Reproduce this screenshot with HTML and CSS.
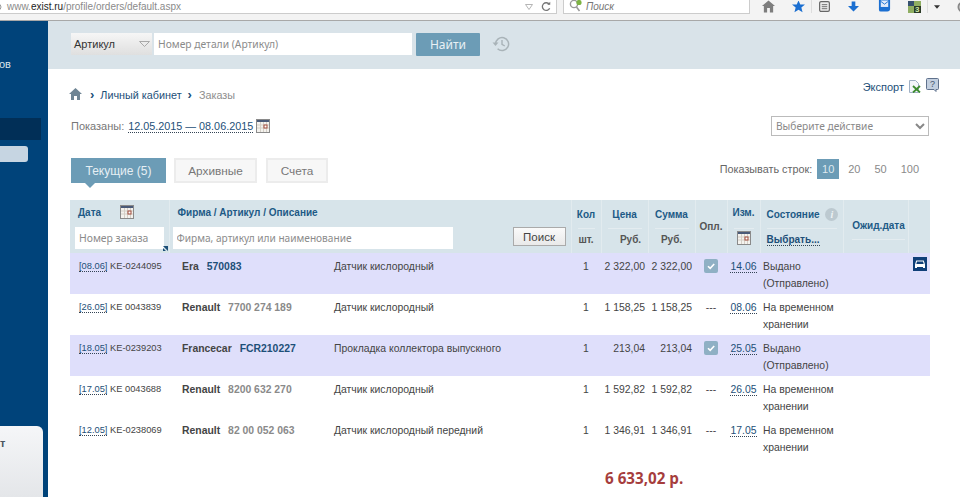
FILE: index.html
```html
<!DOCTYPE html>
<html lang="ru">

<head>
    <meta charset="UTF-8">
    <title>Заказы</title>
    <link rel="stylesheet" href="styles.css">
</head>

<body>
    <svg class="sprite">
        <symbol id="cal" viewBox="0 0 14 14">
            <rect x="0.5" y="0.5" width="13" height="13" fill="#f4f2ee" stroke="#8a8a8a" />
            <rect x="1" y="1" width="12" height="2" fill="#4a5a78" />
            <path d="M1 6h12M1 9h12M4.5 3v10M7.5 3v10M10.5 3v10" stroke="#d4cfc6" fill="none" />
            <rect x="8" y="6" width="3" height="3" fill="#fff" stroke="#a04a3a" />
        </symbol>
        <symbol id="check" viewBox="0 0 14 14">
            <rect width="14" height="14" rx="2" fill="#8fb0c4" />
            <path d="M4 7.2l2.2 2.2L10.2 5" stroke="#fff" stroke-width="1.6" fill="none" />
        </symbol>
    </svg>

    <div class="browser">
        <div class="urlbar">
            <svg class="url-globe" width="7" height="8" viewBox="0 0 7 8"><circle cx="2" cy="4" r="3" fill="none" stroke="#999" /></svg>
            <span class="url">www.<b>exist.ru</b>/profile/orders/default.aspx</span>
            <svg class="url-arrow" width="8" height="6" viewBox="0 0 8 6"><path d="M0.5 0.5h7L4 5.5z" fill="none" stroke="#b5b5b5" /></svg>
            <svg class="url-reload" width="10" height="11" viewBox="0 0 12 12"><path d="M10 3.5A4.6 4.6 0 1 0 10.4 8" fill="none" stroke="#777" stroke-width="1.6" /><path d="M7.5 3.8h3.6V0.4z" fill="#777" /></svg>
        </div>
        <div class="websearch">
            <svg width="16" height="13" viewBox="0 0 16 13"><circle cx="5" cy="4" r="3.6" fill="none" stroke="#999" stroke-width="1.4" /><path d="M7.5 7l3 4" stroke="#999" stroke-width="1.6" /><circle cx="10" cy="2.5" r="2.6" fill="#7cb342" /></svg>
            <i>Поиск</i>
        </div>
        <div class="tools">
            <svg class="t-home" width="13" height="13" viewBox="0 0 14 13"><path d="M7 0L0 6h2v7h3.500V8h3v5H12V6h2z" fill="#7d7d7d" /></svg>
            <svg class="t-star" width="13" height="12" viewBox="0 0 16 13"><path d="M8 -1.500l2.200 5H16l-4.500 3.700L13 13 8 9.800 3 13l1.500-5.800L0 3.500h5.800z" fill="#1b6fd1" /></svg>
            <span class="t-sep"></span>
            <svg class="t-read" width="11" height="11" viewBox="0 0 12 12"><rect x="0.700" y="0.700" width="10.600" height="10.600" rx="1.500" fill="#eee" stroke="#666" stroke-width="1.300" /><path d="M3 4h6M3 6.200h6M3 8.400h6" stroke="#666" /></svg>
            <svg class="t-load" width="11" height="11" viewBox="0 0 12 11"><path d="M4 0h4v5h4l-6 6-6-6h4z" fill="#1b6fd1" /></svg>
            <svg class="t-mail" width="13" height="13" viewBox="0 0 14 13"><path d="M1 -1h12v10a3 3 0 0 1-3 3H3a2 2 0 0 1-2-2z" fill="#1b6fd1" /><path d="M3 0h8v7H3z" fill="#dfeafa" /><path d="M3 1l4 3 4-3" stroke="#1b6fd1" fill="none" /></svg>
            <svg class="t-ext" width="13" height="12" viewBox="0 0 13 12"><rect width="13" height="12" fill="#8fae62" /><rect x="0" y="0" width="6" height="5" fill="#35506e" /><rect x="6" y="5" width="7" height="7" fill="#2a3a26" /><text x="7" y="11" class="tool-text">3</text></svg>
            <span class="t-sep t-sep2"></span>
            <svg class="t-down" width="6" height="4" viewBox="0 0 7 4"><path d="M0 0h7L3.500 4z" fill="#333" /></svg>
            <svg class="t-last" width="12" height="12" viewBox="0 0 12 12"><circle cx="6" cy="6" r="4.500" fill="none" stroke="#888" stroke-width="2" /></svg>
        </div>
    </div>

    <div class="page">
        <div class="sidebar">
            <div class="side-text">ов</div>
            <div class="side-active"></div>
            <div class="side-sub"></div>
            <div class="side-card">т</div>
        </div>

        <div class="main">
            <div class="searchbar">
                <div class="kind">Артикул<svg width="11" height="6" viewBox="0 0 11 6"><path d="M0.500 0.500h10L5.500 5.500z" fill="none" stroke="#a9a9a9" /></svg></div>
                <input class="part" type="text" placeholder="Номер детали (Артикул)">
                <button class="find">Найти</button>
                <svg class="history" width="18" height="16" viewBox="0 0 18 16"><path d="M3.600 8a6.500 6.500 0 1 1 2 4.700" fill="none" stroke="#a9b3b8" stroke-width="1.500" /><path d="M0.500 6.500h6l-3 3.500z" fill="#a9b3b8" /><path d="M10 4v4.300l2.800 1.700" fill="none" stroke="#a9b3b8" stroke-width="1.400" /></svg>
            </div>

            <div class="content">
                <div class="crumbs-row">
                    <div class="crumbs">
                        <svg width="13" height="12" viewBox="0 0 13 12"><path d="M6.500 0L0 6h2v6h3V8h3v4h3V6h2z" fill="#6f8594" /></svg>
                        <span class="sep">›</span>
                        <a>Личный кабинет</a>
                        <span class="sep">›</span>
                        <span class="cur">Заказы</span>
                    </div>
                    <div class="export">
                        <a>Экспорт</a>
                        <svg width="13" height="13" viewBox="0 0 13 13"><path d="M1.500 0.500h6l3 3v9h-9z" fill="#f3f6fa" stroke="#9fb0c4" /><path d="M5 6l7 6.500M12 6l-7 6.500" stroke="#3d8b2f" stroke-width="1.800" /></svg>
                        <svg class="help" width="13" height="14" viewBox="0 0 13 14"><path d="M1.500 0.500h10a1 1 0 0 1 1 1v9a1 1 0 0 1-1 1h-1.500v2l-2-2h-6.500a1 1 0 0 1-1-1v-9a1 1 0 0 1 1-1z" fill="#c3cfdf" stroke="#5f718c" /><text x="6.500" y="9" class="help-text">?</text></svg>
                    </div>
                </div>

                <div class="dates-row">
                    <div class="dates">
                        Показаны:
                        <a class="dotted">12.05.2015 — 08.06.2015</a>
                        <svg class="cal" width="14" height="14"><use href="#cal" /></svg>
                    </div>
                    <select class="action">
                        <option>Выберите действие</option>
                    </select>
                </div>

                <div class="tabs-row">
                    <div class="tabs">
                        <div class="tab tab-on">Текущие (5)</div>
                        <div class="tab tab-arch">Архивные</div>
                        <div class="tab tab-bills">Счета</div>
                    </div>
                    <div class="pager">
                        <span>Показывать строк:</span>
                        <span class="page-on">10</span>
                        <span class="page-n">20</span>
                        <span class="page-n">50</span>
                        <span class="page-n">100</span>
                    </div>
                </div>

                <table class="orders">
                    <colgroup>
                        <col class="c-date">
                        <col class="c-firm">
                        <col class="c-desc">
                        <col class="c-qty">
                        <col class="c-price">
                        <col class="c-sum">
                        <col class="c-paid">
                        <col class="c-chg">
                        <col class="c-state">
                        <col class="c-wait">
                        <col class="c-icon">
                    </colgroup>
                    <thead>
                        <tr class="h1">
                            <th rowspan="2" class="th-date">
                                <div class="date-title">Дата <svg width="14" height="14"><use href="#cal" /></svg></div>
                                <div class="order-filter">
                                    <input type="text" placeholder="Номер заказа">
                                    <svg width="5" height="5" viewBox="0 0 5 5"><path d="M0 0l5 5V0zM0 2l3 3H0z" fill="#1d4f78" /></svg>
                                </div>
                            </th>
                            <th rowspan="2" colspan="2" class="th-firm">
                                <div class="firm-title">Фирма / Артикул / Описание</div>
                                <div class="firm-filter">
                                    <input type="text" placeholder="Фирма, артикул или наименование">
                                    <button>Поиск</button>
                                </div>
                            </th>
                            <th>Кол</th>
                            <th>Цена</th>
                            <th>Сумма</th>
                            <th rowspan="2" class="plain">Опл.</th>
                            <th class="th-chg">Изм.</th>
                            <th class="th-state">Состояние <span class="info">i</span></th>
                            <th rowspan="2" class="th-wait"><span>Ожид.дата</span></th>
                            <th rowspan="2"></th>
                        </tr>
                        <tr class="h2">
                            <th class="plain">шт.</th>
                            <th class="plain th-rub">Руб.</th>
                            <th class="plain">Руб.</th>
                            <th><svg width="14" height="14"><use href="#cal" /></svg></th>
                            <th class="th-state"><a class="dotted">Выбрать...</a></th>
                        </tr>
                    </thead>
                    <tbody>
                        <tr class="mark">
                            <td class="date"><a class="dotted">[08.06]</a> KE-0244095</td>
                            <td class="firm"><b>Era</b><a class="art art-link">570083</a></td>
                            <td>Датчик кислородный</td>
                            <td class="qty">1</td>
                            <td class="num">2 322,00</td>
                            <td class="num">2 322,00</td>
                            <td class="paid"><svg width="14" height="14"><use href="#check" /></svg></td>
                            <td class="chg"><a class="dotted">14.06</a></td>
                            <td class="state">Выдано (Отправлено)</td>
                            <td></td>
                            <td class="car">
                                <svg width="14" height="14" viewBox="0 0 14 14"><rect width="14" height="14" fill="#0f3f78" /><path d="M2 7.500l1.200-4h7.600l1.200 4v3.500h-2V10H4v1H2z" fill="#fff" /><path d="M4 4.500h6l0.700 2.500H3.300z" fill="#0f3f78" /></svg>
                            </td>
                        </tr>
                        <tr>
                            <td class="date"><a class="dotted">[26.05]</a> KE 0043839</td>
                            <td class="firm"><b>Renault</b><a class="art">7700 274 189</a></td>
                            <td>Датчик кислородный</td>
                            <td class="qty">1</td>
                            <td class="num">1 158,25</td>
                            <td class="num">1 158,25</td>
                            <td class="paid">---</td>
                            <td class="chg"><a class="dotted">08.06</a></td>
                            <td class="state">На временном хранении</td>
                            <td></td>
                            <td></td>
                        </tr>
                        <tr class="mark">
                            <td class="date"><a class="dotted">[18.05]</a> KE-0239203</td>
                            <td class="firm"><b>Francecar</b><a class="art art-link">FCR210227</a></td>
                            <td>Прокладка коллектора выпускного</td>
                            <td class="qty">1</td>
                            <td class="num">213,04</td>
                            <td class="num">213,04</td>
                            <td class="paid"><svg width="14" height="14"><use href="#check" /></svg></td>
                            <td class="chg"><a class="dotted">25.05</a></td>
                            <td class="state">Выдано (Отправлено)</td>
                            <td></td>
                            <td></td>
                        </tr>
                        <tr>
                            <td class="date"><a class="dotted">[17.05]</a> KE 0043688</td>
                            <td class="firm"><b>Renault</b><a class="art">8200 632 270</a></td>
                            <td>Датчик кислородный</td>
                            <td class="qty">1</td>
                            <td class="num">1 592,82</td>
                            <td class="num">1 592,82</td>
                            <td class="paid">---</td>
                            <td class="chg"><a class="dotted">26.05</a></td>
                            <td class="state">На временном хранении</td>
                            <td></td>
                            <td></td>
                        </tr>
                        <tr>
                            <td class="date"><a class="dotted">[12.05]</a> KE-0238069</td>
                            <td class="firm"><b>Renault</b><a class="art">82 00 052 063</a></td>
                            <td>Датчик кислородный передний</td>
                            <td class="qty">1</td>
                            <td class="num">1 346,91</td>
                            <td class="num">1 346,91</td>
                            <td class="paid">---</td>
                            <td class="chg"><a class="dotted">17.05</a></td>
                            <td class="state">На временном хранении</td>
                            <td></td>
                            <td></td>
                        </tr>
                    </tbody>
                </table>

                <div class="total">6 633,02 р.</div>
            </div>
        </div>
    </div>
</body>

</html>
```

FILE: styles.css
```css
html,
body {
    margin: 0;
    height: 497px;
    overflow: hidden;
    background: #fff;
}

body {
    font-family: "Liberation Sans", Arial, sans-serif;
    font-size: 11px;
    color: #444;
}

.sprite {
    display: none;
}

a {
    color: #1d4f78;
}

.dotted {
    border-bottom: 1px dotted #345;
}

/* browser chrome */
.browser {
    display: flex;
    align-items: flex-start;
    height: 20px;
    background: #f3f3f3;
    border-bottom: 1px solid #a8a8a8;
    overflow: hidden;
}

.urlbar {
    display: flex;
    flex: none;
    align-items: center;
    width: 556px;
    height: 13px;
    background: #fff;
    border-right: 1px solid #ccc;
    border-bottom: 1px solid #ccc;
}

.url-globe {
    margin-left: -4px;
}

.url {
    flex: 1;
    padding-left: 4px;
    font-size: 10px;
    color: #8a8a8a;
}

.url b {
    font-weight: normal;
    color: #222;
}

.url-arrow {
    margin-right: 8px;
}

.url-reload {
    margin-right: 5px;
}

.websearch {
    display: flex;
    flex: none;
    align-items: center;
    gap: 1px;
    width: 180px;
    height: 13px;
    margin-left: 6px;
    padding-left: 5px;
    background: #fff;
    border: 1px solid #ccc;
    border-top: 0;
    color: #777;
    font-size: 10px;
}

.tools {
    display: flex;
    flex: none;
    align-items: center;
    height: 13px;
    margin-left: 12px;
}

.t-star { margin-left: 17px; }
.t-read { margin-left: 7px; }
.t-load { margin-left: 18px; }
.t-mail { margin-left: 19px; }
.t-ext { margin-left: 17px; }
.t-down { margin-left: 6px; }
.t-last { margin-left: 17px; }

.t-sep {
    width: 1px;
    height: 13px;
    margin-left: 6px;
    background: #ddd;
}

.t-sep2 {
    margin-left: 6px;
}

.tool-text {
    font-size: 8px;
    font-weight: bold;
    fill: #cfe8a8;
}

/* page */
.page {
    display: flex;
    height: 476px;
}

.sidebar {
    display: flex;
    flex-direction: column;
    width: 48px;
    background: #00437a;
}

.side-text {
    margin: 37px 0 0 -1px;
    height: 13px;
    line-height: 13px;
    color: #d7e2ea;
    font-size: 11px;
}

.side-active {
    width: 41px;
    height: 22px;
    margin-top: 47px;
    background: #012f57;
}

.side-sub {
    width: 28px;
    height: 16px;
    margin-top: 6px;
    background: #c6d5e2;
    border-radius: 0 3px 3px 0;
}

.side-card {
    width: 43px;
    margin-top: auto;
    height: 71px;
    padding-top: 11px;
    box-sizing: border-box;
    background: linear-gradient(#f5f6f8, #e4e6e9);
    border-radius: 0 6px 0 0;
    color: #4a5560;
    font-weight: bold;
    font-size: 11px;
}

.main {
    flex: 1;
    min-width: 0;
}

.searchbar {
    display: flex;
    align-items: center;
    height: 48px;
    padding: 0 0 2px 23px;
    box-sizing: border-box;
    background: #d9e3e9;
}

.kind {
    display: flex;
    align-items: center;
    justify-content: space-between;
    width: 81px;
    height: 22px;
    padding: 0 2px 0 3px;
    box-sizing: border-box;
    background: linear-gradient(#f6f6f6, #dfdfdf);
    color: #333;
    font-size: 11px;
}

.part {
    width: 258px;
    height: 22px;
    margin-left: 2px;
    padding: 0 4px;
    box-sizing: border-box;
    border: 0;
    background: #fff;
    font-family: "Noto Sans", sans-serif;
    font-size: 10.300px;
}

.part::placeholder,
.orders input::placeholder {
    color: #8b8b8b;
    opacity: 1;
}

.find {
    width: 64px;
    height: 23px;
    margin-left: 4px;
    border: 0;
    border-radius: 1px;
    background: #6c9cb6;
    color: #e8f0f4;
    font-family: "Noto Sans", sans-serif;
    font-size: 12px;
}

.history {
    margin-left: 12px;
}

.content {
    padding: 0 30px 0 23px;
}

.crumbs-row {
    display: flex;
    justify-content: space-between;
    height: 47px;
}

.crumbs {
    display: flex;
    align-items: center;
    gap: 6px;
    height: 14px;
    margin: 19px 0 0 -2px;
    font-size: 10.800px;
}

.crumbs svg {
    margin-top: -3px;
    margin-right: 2px;
}

.crumbs .sep {
    color: #1d4f78;
    font-weight: bold;
    font-size: 13px;
    line-height: 14px;
}

.crumbs .cur {
    margin-left: 1px;
    color: #8e8e8e;
}

.export {
    display: flex;
    align-items: flex-start;
    gap: 4px;
    margin: 11px -9px 0 0;
    height: 16px;
}

.export a {
    padding-top: 1px;
}

.help {
    margin-top: -2px;
    margin-left: 1px;
}

.help-text {
    font-size: 9px;
    fill: #44566e;
    text-anchor: middle;
}

.dates-row {
    display: flex;
    justify-content: space-between;
    align-items: center;
    height: 20px;
    margin-right: 1px;
}

.dates {
    display: flex;
    align-items: center;
    gap: 3px;
    color: #777;
    font-size: 11px;
}

.dates a {
    font-size: 10.800px;
    margin-left: 1px;
}

.action {
    width: 158px;
    height: 20px;
    padding: 0;
    border: 1px solid #bbb;
    border-radius: 0;
    background: #fff;
    color: #888;
    font-family: "Noto Sans", sans-serif;
    font-size: 10.200px;
}

.tabs-row {
    display: flex;
    justify-content: space-between;
    margin: 22px 0 17px;
    height: 25px;
}

.tabs {
    display: flex;
    gap: 8px;
}

.tab {
    position: relative;
    display: flex;
    align-items: center;
    justify-content: center;
    height: 25px;
    box-sizing: border-box;
    border: 2px solid #ececec;
    background: #f7f7f7;
    color: #777;
    font-size: 11.800px;
}

.tab-on {
    width: 95px;
    border: 0;
    background: #6c9cb6;
    color: #e6eff4;
    font-size: 12px;
}

.tab-on::after {
    content: "";
    position: absolute;
    left: 14px;
    bottom: -5px;
    border-top: 5px solid #6c9cb6;
    border-left: 5px solid transparent;
    border-right: 5px solid transparent;
}

.tab-arch {
    width: 83px;
}

.tab-bills {
    width: 62px;
    margin-left: 1px;
}

.pager {
    display: flex;
    align-items: center;
    height: 22px;
    margin-right: 11px;
    color: #666;
    font-size: 10.800px;
}

.page-on {
    width: 22px;
    height: 20px;
    line-height: 20px;
    margin-left: 5px;
    text-align: center;
    background: #6c9cb6;
    color: #dfe9ef;
    font-size: 11px;
}

.page-n {
    margin-left: 14px;
    color: #8a8a8a;
    font-size: 11px;
}

.page-on + .page-n {
    margin-left: 9px;
}

/* orders table */
.orders {
    table-layout: fixed;
    border-collapse: collapse;
    width: 860px;
    margin-left: -1px;
}

.c-date { width: 99px; }
.c-firm { width: 165px; }
.c-desc { width: 237px; }
.c-qty { width: 30px; }
.c-price { width: 47px; }
.c-sum { width: 47px; }
.c-paid { width: 32px; }
.c-chg { width: 33px; }
.c-state { width: 83px; }
.c-wait { width: 65px; }
.c-icon { width: 22px; }

.orders th {
    box-sizing: border-box;
    background: #d7e4ea;
    border-left: 1px solid #e2ebef;
    color: #1d5a86;
    font-size: 10px;
    font-weight: bold;
    text-align: center;
    vertical-align: middle;
    padding: 0;
    white-space: nowrap;
}

.orders .h1 th {
    height: 28px;
}

.orders .h2 th {
    height: 25px;
    padding-bottom: 3px;
    background-image: linear-gradient(#e4ecf0, #e4ecf0);
    background-size: calc(100% - 12px) 1px;
    background-position: center top;
    background-repeat: no-repeat;
}

.orders .plain {
    color: #555;
}

.orders .th-date,
.orders .th-firm {
    text-align: left;
    vertical-align: top;
    border-left: 0;
}

.orders .th-firm {
    border-left: 1px solid #e2ebef;
}

.date-title {
    display: flex;
    align-items: flex-start;
    gap: 19px;
    height: 27px;
    padding: 7px 0 0 8px;
    box-sizing: border-box;
}

.date-title svg {
    margin-top: -2px;
}

.order-filter {
    position: relative;
    display: flex;
    height: 26px;
}

.order-filter input {
    width: 89px;
    height: 22px;
    margin-left: 5px;
    padding: 0 4px;
    box-sizing: border-box;
    border: 0;
    background: #fff;
    font-family: "Noto Sans", sans-serif;
    font-size: 10.400px;
}

.order-filter svg {
    position: absolute;
    left: 93px;
    top: 19px;
}

.firm-title {
    height: 27px;
    padding: 7px 0 0 8px;
    box-sizing: border-box;
}

.firm-filter {
    display: flex;
    align-items: flex-start;
    height: 26px;
}

.firm-filter input {
    width: 280px;
    height: 22px;
    margin-left: 3px;
    padding: 0 4px;
    box-sizing: border-box;
    border: 0;
    background: #fff;
    font-family: "Noto Sans", sans-serif;
    font-size: 10.150px;
}

.firm-filter button {
    width: 53px;
    height: 19px;
    margin-left: 60px;
    padding: 0;
    border: 1px solid #aaa;
    background: linear-gradient(#fafafa, #e9e9e9);
    color: #444;
    font-family: "Liberation Sans", sans-serif;
    font-size: 11.500px;
}

.orders .th-state {
    text-align: left;
    padding-left: 6px;
}

.orders .th-chg {
    padding-bottom: 4px;
}

.orders .th-wait {
    padding-left: 6px;
}

.orders .th-wait span {
    display: inline-block;
    padding-bottom: 8px;
    margin-top: 6px;
    border-bottom: 1px solid #e4ecf0;
}

.info {
    display: inline-block;
    width: 13px;
    height: 13px;
    line-height: 13px;
    margin-left: 3px;
    border-radius: 50%;
    background: #bcc9d0;
    color: #eef3f5;
    font-family: "Liberation Serif", serif;
    font-style: italic;
    text-align: center;
}

.th-rub {
    padding-left: 12px !important;
}

.orders td {
    height: 41px;
    padding: 5px 0 0;
    box-sizing: border-box;
    vertical-align: top;
    line-height: 17px;
    font-size: 10.400px;
    color: #444;
}

.orders .mark td {
    background: #dfdffb;
}

.orders .date {
    padding-left: 9px;
    font-size: 9.300px;
    white-space: nowrap;
}

.orders .firm {
    padding-left: 13px;
    white-space: nowrap;
}

.firm b {
    color: #444;
}

.art {
    margin-left: 8px;
    color: #8a8a8a;
    font-weight: bold;
}

.art-link {
    color: #1d4f78;
}

.orders .qty {
    text-align: center;
}

.orders .num {
    padding-right: 3px;
    text-align: right;
    white-space: nowrap;
}

.orders .paid {
    text-align: center;
}

.orders .paid svg {
    margin-top: 1px;
}

.orders .chg {
    text-align: center;
}

.orders .state {
    padding-left: 3px;
}

.orders .car {
    padding-top: 4px;
}

.orders .car svg {
    display: block;
    margin-left: 5px;
}

.total {
    margin: 10px 0 0 534px;
    font-family: "Open Sans", sans-serif;
    font-weight: bold;
    font-size: 15.200px;
    line-height: 20px;
    color: #a63d3d;
    white-space: nowrap;
}
```
